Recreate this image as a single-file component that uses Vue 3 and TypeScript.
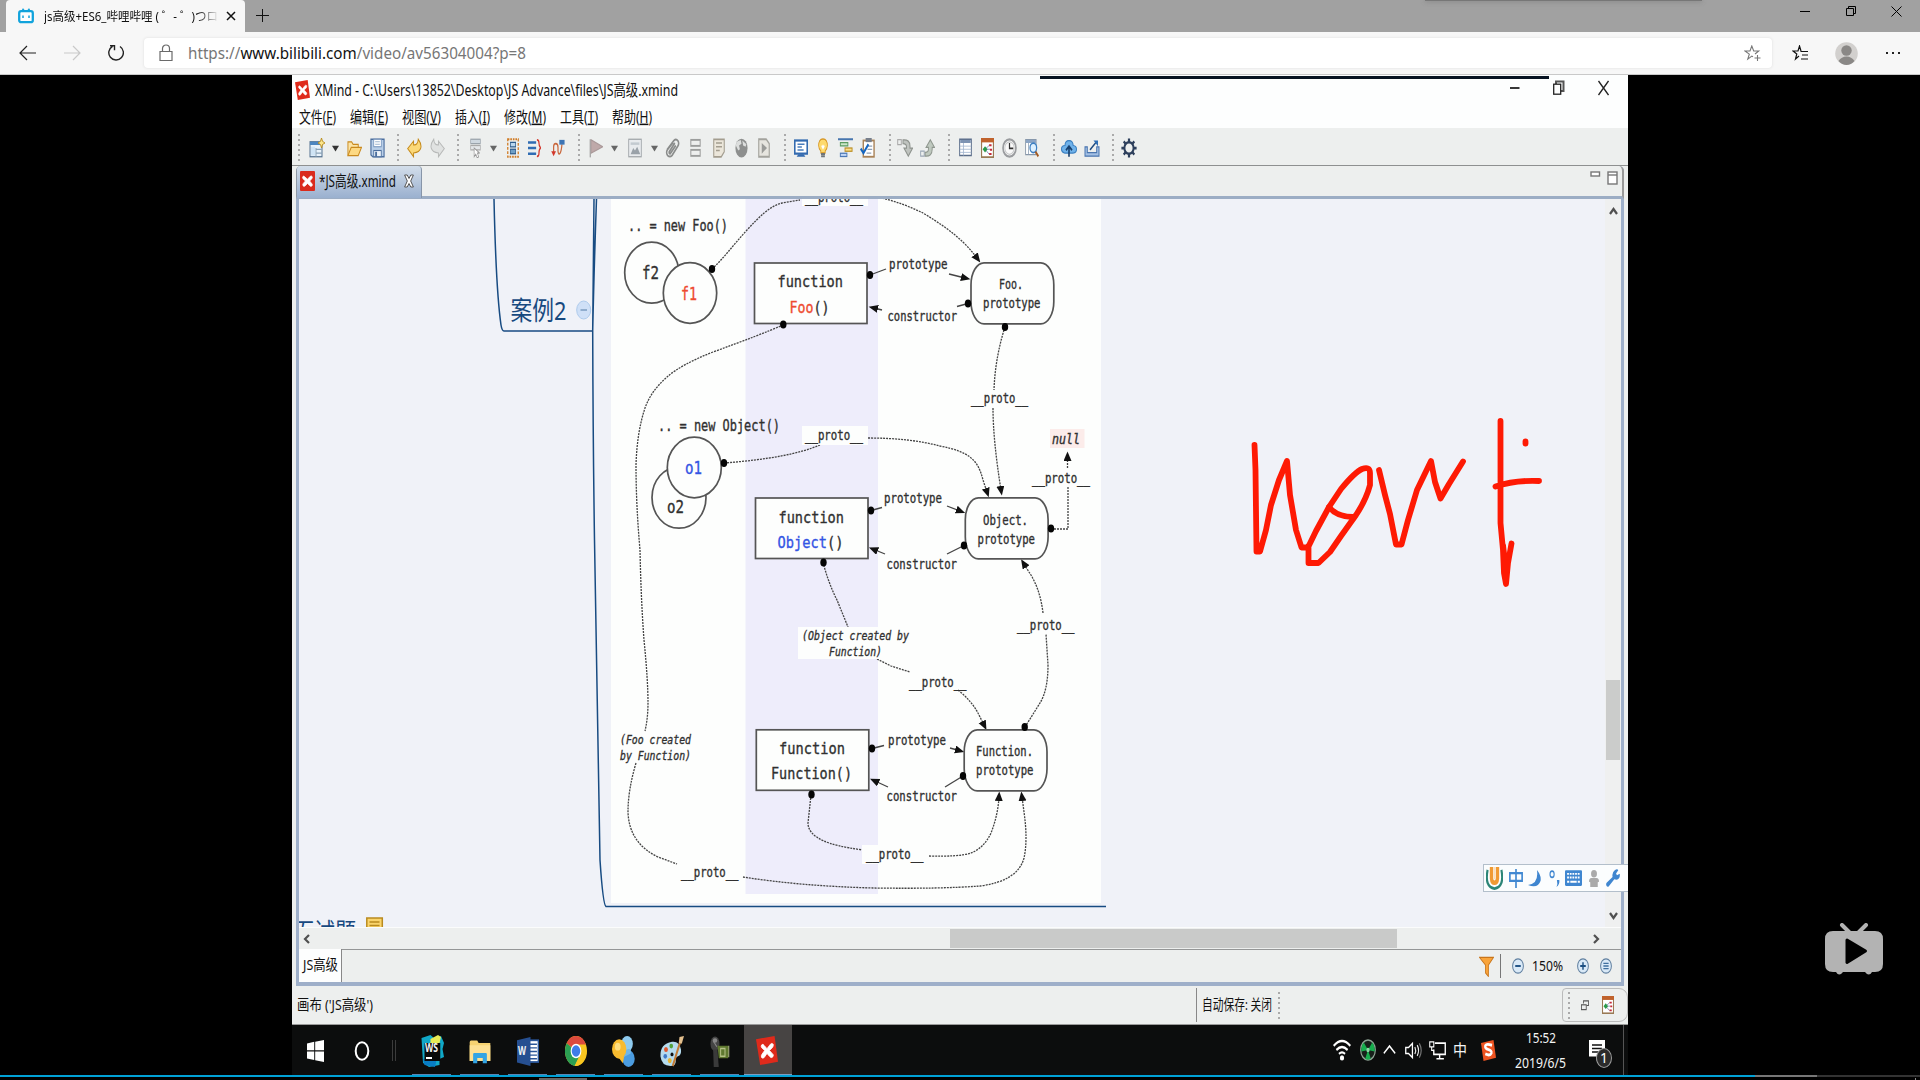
<script setup lang="ts">
import { h, type FunctionalComponent } from 'vue'

interface FitProps { w: number; s: number; h?: number; t?: string }

// Single line of text squeezed or stretched to an exact width
const Fit: FunctionalComponent<FitProps> = (props, { slots }) => {
  const height = props.h ?? 20
  return h('svg', { width: props.w, height, style: 'display:block;overflow:visible;flex:none' }, [
    h('text', {
      x: 0, y: height / 2 + props.s * 0.36, 'font-size': props.s, fill: 'currentColor',
      textLength: props.w, lengthAdjust: 'spacingAndGlyphs',
    }, slots.default ? slots.default() : props.t),
  ])
}
Fit.props = ['w', 's', 'h', 't']

interface IconProps { n: string; w: number; h: number }
const Ico: FunctionalComponent<IconProps> = (props) => h('svg', {
  width: props.w, height: props.h, viewBox: '0 0 16 16', preserveAspectRatio: 'none', fill: 'none',
  style: 'display:block;flex:none', innerHTML: icons[props.n],
})
Ico.props = ['n', 'w', 'h']

const calendar = '<rect x=".7" y=".7" width="14.6" height="14.6" fill="#fff" stroke="#9a7a55" stroke-width="1.4"/><rect width="16" height="3.500" fill="#c0622c"/><path d="M5 9l5-3M5 9h6M5 9l5 4" stroke="#7b7dac" stroke-width=".8"/><path d="M2 9l3-2.500 3 2.500-3 2.500z" fill="#2a9a4a"/><path d="M10 5h3v1.600h-3zM11 8.500h2.600v1.600H11zM10 12h3v1.600h-3z" fill="#c32c39"/>'
const xlogo = '<path d="M0 1.800L13.500 0 16 14.200 3 16z" fill="#df2a1b"/><path d="M4 5q1-1 2 .3L8 7l2.500-2.500q1-.8 2 0 .3 1-.5 1.800L9.800 8l2.700 2.300q.4 1.200-1 1.600-1 .1-1.700-.7L8 9.600l-2 2.200q-1 .9-2 0-.4-1 .4-1.800L6.300 8 4.200 6.500q-.7-.8-.2-1.500z" fill="#fff" stroke="#fff" stroke-width=".5"/>'

const icons: Record<string, string> = {
  xlogo,
  xtab: '<rect width="16" height="16" rx="1" fill="#da2b1d"/><path d="M3 4.500q1-1 2.200.3L8 6.600 11 4.200q1.200-.6 2 .3.300 1-.5 1.700L10.300 8l2.700 2.500q.4 1.200-.7 1.700-1.200.3-2-.6L8 9.900 5.400 11.900q-1.200.8-2.200-.1-.6-1 .3-1.900L5.800 8 3.200 6.200q-.8-.7-.2-1.700z" fill="#fff" stroke="#fff" stroke-width=".7"/>',
  caret: '<path d="M0 5.500h16L8 12z" fill="#333"/>',
  caretg: '<path d="M0 5.500h16L8 12z" fill="#666"/>',
  new: '<rect x="1" y="3" width="12" height="12" fill="#e9f3fb" stroke="#55728f"/><rect x="1" y="3" width="10" height="2.600" fill="#4c86c0"/><path d="M7 8v7M7 9h6M7 12h6" stroke="#8aa3b8"/><rect x="2" y="7" width="4" height="7" fill="#cfe4f5"/><path d="M12.500 0l1 2.600L16 4l-2.500 1.200-1 2.800-1-2.800L9 4l2.500-1.400z" fill="#fbe58a" stroke="#b88a1c" stroke-width=".8"/>',
  open: '<path d="M1 14V3h4l1.500 2H12v3" fill="#fbe4a6" stroke="#c9891e"/><path d="M1 14l3.500-6.500H15.500L12 14z" fill="#fdd983" stroke="#c9891e"/>',
  save: '<path d="M1 1h14v14H3l-2-1.500z" fill="#b9cfe8" stroke="#4c6f9e" stroke-width="1.200"/><rect x="4" y="1" width="8" height="6" fill="#fff" stroke="#6f8fb8" stroke-width=".8"/><path d="M5.500 3h5M5.500 5h5" stroke="#8fa9c7" stroke-width=".8"/><rect x="4" y="10" width="8" height="5" fill="#eef4fa" stroke="#4c6f9e" stroke-width=".9"/><rect x="5.500" y="11" width="2" height="4" fill="#4c6f9e"/>',
  undo: '<path d="M.7 8.500L7 2.500v3Q11.500 6 12 1q3.800 4 2.700 7-1.300 3.500-7.700 4V15z" fill="#fbd878" stroke="#c68b1c" stroke-width="1"/>',
  redo: '<path d="M15.300 8.500L9 2.500v3Q4.500 6 4 1 .2 5 1.300 8 2.600 11.500 9 12V15z" fill="#e0e2e1" stroke="#b7b9b8" stroke-width="1"/>',
  topic: '<rect x="1" y="1" width="14" height="3.500" fill="#cfd8e0" stroke="#9aa3ab"/><rect x="1" y="6" width="14" height="3.500" fill="#e4e7ea" stroke="#aaa"/><path d="M6 8v7l2.500-2 2 3 2-1-1.700-3H14z" fill="#fff" stroke="#999"/>',
  marquee: '<rect x="1" y="1" width="14" height="14" stroke="#d07b24" stroke-width="1.700" stroke-dasharray="2.200 1.200"/><rect x="4.500" y="3.500" width="7" height="3.600" fill="#b9d6ee" stroke="#2e5c8c"/><rect x="4.500" y="9" width="7" height="3.600" fill="#6fa0c8" stroke="#2e5c8c"/>',
  summary: '<path d="M0 3.500h10M0 8h10M0 12.500h10" stroke="#2f6cb3" stroke-width="2"/><path d="M11 1.500q2.500 0 2.500 2.500t2 4q-2 1-2 4T11 14.500" stroke="#d2372c" stroke-width="1.500"/>',
  relation: '<path d="M3 12V7q0-2.500 2.500-2.500T8 7.500v3q.5 3.500 2.500 1.500 1.500-2 2-7" stroke="#c9673c" stroke-width="1.400"/><path d="M.3 10.500h5.400L3 14.500z" fill="#d2372c"/><rect x="9.500" y="1.500" width="6" height="3.800" fill="#3d75b5"/>',
  flag: '<path d="M1.500 1v14.500" stroke="#aaa" stroke-width="1.600"/><path d="M2.500 1.500L15.500 7 2.500 12z" fill="#bfa9a9" stroke="#a99"/>',
  image: '<rect x=".8" y="1" width="14.400" height="14" fill="#e8ebee" stroke="#9fa4a8"/><path d="M3 13l3-5 2 2 2.500-3L14 13z" fill="#9aa2a9"/><path d="M3 3.500h10v2H3z" fill="#c3cad0"/>',
  clip: '<path d="M2 9.500L9.500 2q2.500-1.700 4.500.5 1.300 2-.3 4L7.500 14q-2.300 1.700-4.700 0-2-2.300-.3-4.500l6.300-6M10.500 4L4.500 11q-.4 1.500 1 1.500l6-6.500" stroke="#8a8c8b" stroke-width="1.600"/>',
  boundary: '<rect x="1.200" y="1.500" width="13.600" height="4.800" stroke="#9b9d9c" stroke-width="1.500"/><rect x="1.200" y="9.500" width="13.600" height="4.800" stroke="#9b9d9c" stroke-width="1.500"/>',
  note: '<path d="M1 1h14v10l-4 4H1z" fill="#ebe6da" stroke="#a39d8f" stroke-width="1.400"/><path d="M4 4h8M4 7h8M4 10h5" stroke="#a39d8f" stroke-width="1.200"/>',
  globe: '<circle cx="8" cy="8" r="7.500" fill="#8d8f8e"/><path d="M2 3l5-1.500 1 3-3 1.500 1 3-2 1-3-4zM9 2l5 3-1 2-3-1z" fill="#dcdedd"/>',
  play: '<path d="M1 1h10l4 3.500V15H1z" fill="#e6e5df" stroke="#a3a39d" stroke-width="1.500"/><path d="M5 4l7 4-7 4.500z" fill="#9a9b98"/>',
  monitor: '<rect x=".9" y="2" width="14.200" height="10.500" fill="#fff" stroke="#336bb0" stroke-width="1.800"/><path d="M4 5h8M4 7.200h5M4 9.500h7" stroke="#4a7dbb" stroke-width="1.200"/><path d="M3 15l2-2h6l2 2z" fill="#336bb0"/>',
  bulb: '<path d="M8 .7q7 .3 7 5.300 0 2.500-3.500 4.500V12h-7v-1.500Q1 8.500 1 6 1 1 8 .7z" fill="#fdda6e" stroke="#d6941e" stroke-width="1.200"/><path d="M6 6l2 2 2-2" stroke="#fff" stroke-width="2"/><path d="M4.800 12.800h6.400M5 14.600h6" stroke="#6f757a" stroke-width="1.500"/>',
  gantt: '<rect y=".2" width="16" height="1.600" fill="#4776ae"/><rect x="2.500" y="3.700" width="8" height="2.600" fill="#cbe7cb" stroke="#5b9c62"/><rect x="7.500" y="8" width="7.500" height="2.600" fill="#fbe08d" stroke="#bb8f25"/><rect x="2.500" y="12.200" width="7" height="2.600" fill="#c3d8f7" stroke="#4b78b6"/>',
  clipboard: '<rect x="3.500" y="2" width="11.500" height="13" fill="#fff" stroke="#a98358" stroke-width="1.500"/><rect x="6" y="0" width="6.500" height="3.300" fill="#777f8b"/><path d="M8 6.500h5M8 9h5M7 12h5" stroke="#8ea0b5"/><path d="M.7 8.500L3.700 12 9 5" stroke="#1566c0" stroke-width="2"/>',
  down: '<rect x=".7" y="1.300" width="3.600" height="4" stroke="#aaa" /><path d="M6 1.500q7-.5 7 5v1.500h2.600L11.300 14.500 7 8h2.500V7q0-2.500-3.500-2.500z" fill="#bfc3bf" stroke="#8e938e"/>',
  up: '<rect x=".7" y="10.500" width="3.800" height="4" stroke="#9aa7b5"/><path d="M5.500 14.500q7.500.5 7.500-5.500V7.500h2.500L11 1.500 6.500 7.500H9v1.500q0 2.500-3.500 2.500z" fill="#bfc9bf" stroke="#8e968e"/>',
  table: '<rect x=".8" y="1" width="14.400" height="13" fill="#fff" stroke="#5b6d89" stroke-width="1.200"/><rect x="1.500" y="1.500" width="13" height="2.500" fill="#7d93b3"/><path d="M1 6.500h14M1 9h14M1 11.500h14M5.500 4v10" stroke="#a3b6d0" stroke-width=".8"/>',
  calendar,
  clock: '<circle cx="8" cy="8" r="6.900" fill="#fafafa" stroke="#9a9c9f" stroke-width="1.800"/><circle cx="8" cy="8" r="5" stroke="#c6c8c9"/><path d="M8 4v4.300h4" stroke="#333" stroke-width="1.300"/>',
  search: '<rect x=".7" y="1.300" width="12" height="12" fill="#fff" stroke="#8796a8"/><rect x="1" y="1.500" width="11.500" height="2.500" fill="#8ba4c4"/><path d="M4 4v9" stroke="#9ab"/><circle cx="9.500" cy="7.800" r="3.800" fill="#ddf0ff" stroke="#3d7fc2" stroke-width="1.400"/><path d="M12 11l3.300 3.700" stroke="#a35a22" stroke-width="2"/>',
  cloud: '<path d="M3.500 12Q.5 11.500.5 8.800T4 6Q4 2 8 2t4.200 4q3.300.3 3.300 3t-3 3z" fill="#6fb2ea" stroke="#3a7fc0"/><path d="M8 15V7.500M5 9.800L8 6.500l3 3.300" stroke="#17406e" stroke-width="1.600"/>',
  share: '<path d="M1 7v7.500h14V7h-2.300v4.700H3.300V7z" fill="#a3c0e5" stroke="#4b76af"/><path d="M6 9.500L12.500 3" stroke="#1d4a80" stroke-width="1.400"/><path d="M9.500 2H14v4.500z" fill="#2b6cb5"/>',
  gear: '<path d="M8 .4v15.200M.4 8h15.200M2.700 2.700l10.600 10.600M13.300 2.700L2.700 13.300" stroke="#2d3f5c" stroke-width="2.200"/><circle cx="8" cy="8" r="4.600" fill="#edefee" stroke="#2d3f5c" stroke-width="2"/>',
  start: '<path d="M0 2.500l6.800-1.200v6.200H0zM7.700 1.200L16 0v7.500H7.700zM0 8.400h6.800v6.200L0 13.500zM7.700 8.400H16V16l-8.300-1.200z" fill="#fff"/>',
  ws: '<path d="M1 1.500L7 0l3 2 4-1.500L16 4l-1 3 1 4-3 1v3l-7 1-4-2z" fill="#10a8c8"/><path d="M7 2l5-2 2 1-1 3-6 1z" fill="#e7ea55"/><path d="M2 12l9 .5-1 3.500-7-1z" fill="#087cc4"/><rect x="3" y="4" width="10.500" height="9" fill="#0a0a0a"/><rect x="4" y="11" width="4" height="1" fill="#fff"/>',
  folder: '<path d="M.5 2q0-1 1-1H6l1 1.500h8.500V14H.5z" fill="#f6d271"/><path d="M.5 4h15v10H.5z" fill="#fde093"/><path d="M3 15.500V9.800q0-.8.800-.8h8.400q.8 0 .8.800v5.700h-3v-3.300H6v3.300z" fill="#33a4e3"/>',
  word: '<rect x="8" y="1.800" width="7.500" height="12" fill="#fff" stroke="#2a5699"/><path d="M9 4h5.500M9 6h5.500M9 8h5.500M9 10h5.500M9 12h5.500" stroke="#2a5699" stroke-width=".8"/><path d="M0 1.800L9.800 0v16L0 14z" fill="#264f91"/>',
  chrome: '<circle cx="8" cy="8" r="8" fill="#f9c620"/><path d="M8 8L1.200 3.800A8 8 0 0115.200 4.500H8z" fill="#dc4a3d"/><path d="M8 8L1.200 3.800A8 8 0 007 16l4-6z" fill="#2b9f52"/><path d="M8 8h7.600A8 8 0 017 16l4-6z" fill="#f9c620"/><circle cx="8" cy="8" r="3.900" fill="#fff"/><circle cx="8" cy="8" r="3.100" fill="#3f7de8"/>',
  balloon: '<circle cx="10.500" cy="4" r="4" fill="#8fcbef"/><circle cx="11.500" cy="11.700" r="4.300" fill="#4b9ce0"/><path d="M10 7q4-1 3 2l-5 2z" fill="#6fb6e8"/><circle cx="5" cy="6.700" r="5" fill="#f8bb2f"/><path d="M4 10.500h4.500L7.500 14z" fill="#f8bb2f"/><circle cx="4" cy="5.500" r="2" fill="#fdde80"/>',
  palette: '<path d="M8 3Q13 2.500 14 7q.4 3-2 3.500-2 .5-1.500 2.500 0 2.500-3.500 2.500-6 0-6.700-5Q0 4 8 3z" fill="#b5dbee"/><circle cx="4" cy="7" r="1.300" fill="#e0562d"/><circle cx="7.500" cy="5.200" r="1.200" fill="#52a33c"/><circle cx="3.500" cy="10.500" r="1.200" fill="#3f7ac8"/><circle cx="6.500" cy="12.700" r="1.300" fill="#e8b431"/><circle cx="8" cy="9.500" r="1" fill="#111"/><path d="M8.500 15.500L13.500 3" stroke="#c37b35" stroke-width="1.300"/><path d="M12.500 3.500L13 .5 16 0l-1.500 4z" fill="#e4c08e"/>',
  mic: '<ellipse cx="4" cy="4" rx="3.600" ry="3.800" fill="#444"/><path d="M2.500 2.500l3 3" stroke="#888" stroke-width=".7"/><ellipse cx="4" cy="2.300" rx="1.800" ry="1.200" fill="#888"/><path d="M2.500 7h3.500l1 9H3z" fill="#3a3a3a"/><path d="M6 5h8.500v6.500H7z" fill="#5f782f"/><path d="M8.500 6.500H12v4H8.500zM15 5v6" stroke="#b5c187" stroke-width=".8"/>',
  wifi: '<path d="M.6 5Q8-2 15.400 5M3 8q5-4.300 10 0M5.300 10.800q2.700-2.200 5.400 0" stroke="#fff" stroke-width="1.700"/><circle cx="8" cy="13.800" r="1.900" fill="#fff"/>',
  rad: '<circle cx="8" cy="8" r="7.300" fill="#17201a" stroke="#8fa596" stroke-width="1.200"/><path d="M8 8L3.800 2.500A7 7 0 001.400 9zM8 8l4.200-5.500A7 7 0 0114.600 9zM8 8l-2.800 6.300a7 7 0 005.600 0z" fill="#17ae4e"/><circle cx="8" cy="8" r="1.600" fill="#8fd6a6"/>',
  chev: '<path d="M1 11l7-6.500 7 6.500" stroke="#fff" stroke-width="1.600"/>',
  speaker: '<path d="M.7 5.500h2.600L7 2v12L3.300 10.500H.700z" stroke="#fff" stroke-width="1.200"/><path d="M9.300 5q1.500 3 0 6M11.500 3.500q2.500 4.500 0 9" stroke="#eee" stroke-width="1.100"/><path d="M13.500 2q3.500 6 0 12" stroke="#777" stroke-width="1.100"/>',
  net: '<path d="M5.500 2.500h9.800v9H4.500V7.500M7 15h7M10 11.500V15" stroke="#fff" stroke-width="1.300"/><path d="M.7 1.500h3.800v4H.7zM2.500 5.500v2.800h2" stroke="#fff"/>',
  sogou: '<path d="M1 2.300L13.500 0 16 13.500 3.500 16z" fill="#ee5320"/><path d="M12 4Q6 2.300 5.200 4.600 4.800 6.500 8.500 7.300q3.500.9 3 2.700-1.300 2.400-6.200.6" stroke="#fff" stroke-width="2.200"/>',
  notify: '<path d="M0 0h16v12.500h-6L7.500 16v-3.500H0z" fill="#fff"/><path d="M3 3.800h10M3 6.500h10M3 9.200h7" stroke="#111" stroke-width="1.100"/>',
  funnel: '<path d="M.5 1h15L10 7v8.500L7 13V7z" fill="#f9a43a" stroke="#c9751a" stroke-width=".9"/>',
  minus: '<circle cx="8" cy="8" r="7.200" fill="#d9e9f7" stroke="#5f7f9f" stroke-width="1.300"/><path d="M4.300 8h7.400" stroke="#1c4f82" stroke-width="1.900"/>',
  plus: '<circle cx="8" cy="8" r="7.200" fill="#d9e9f7" stroke="#5f7f9f" stroke-width="1.300"/><path d="M4.300 8h7.400M8 4.300v7.400" stroke="#1c4f82" stroke-width="1.900"/>',
  fit: '<circle cx="8" cy="8" r="7.200" fill="#d9e9f7" stroke="#5f7f9f" stroke-width="1.300"/><path d="M4.500 5.300h7M4.500 8h7M4.500 10.700h7" stroke="#3f6f9f" stroke-width="1.300"/>',
  restoreSm: '<path d="M5 5V1.200h10V8h-4" stroke="#555" stroke-width="1.700"/><rect x="1" y="7" width="9.500" height="7" stroke="#555" stroke-width="1.700"/>',
  ulogo: '<path d="M1.500 2Q-1.500 14 8 15 17.500 14 14.500 2" stroke="#2c8577" stroke-width="2"/><path d="M5.200 0v8q.3 3 2.800 3t2.800-3V0" stroke="#f09a33" stroke-width="3.200"/><path d="M8 0v8.500" stroke="#fbe0b8" stroke-width="1.300"/>',
  zhong: '<rect x="1" y="3.500" width="14" height="6.500" stroke="#4088d2" stroke-width="1.900"/><path d="M8 0v16" stroke="#4088d2" stroke-width="1.900"/>',
  moon: '<path d="M11 0q5.500 5 4.500 10-3.500 8-15.500 4 13.500-1 11-14z" fill="#3f86d0"/>',
  punct: '<circle cx="4.500" cy="4" r="3" stroke="#3f86d0" stroke-width="1.600"/><path d="M11.500 9.500h3.500q1 4-4 6.500 2-2.500.5-6.500z" fill="#3f86d0"/>',
  kbd: '<rect y="1" width="16" height="14" rx="1" fill="#3f86d0"/><path d="M2 4.300h12M2 7.500h12" stroke="#fff" stroke-width="1.700" stroke-dasharray="1.700 .8"/><path d="M2 11.300h2M5 11.300h6M12 11.300h2" stroke="#fff" stroke-width="1.700"/>',
  person: '<ellipse cx="8" cy="3.600" rx="4.700" ry="3.500" fill="#aaa"/><path d="M0 11q0-3.500 4-3.500h8q4 0 4 3.500l-2 .5V16H2v-4.500z" fill="#aaa"/>',
  wrench: '<path d="M10 1q3-1.500 4 0L11.500 4l1 1.500 3.200-1.200Q16.500 9 12 9.500l-2.500-.3L3 15.500Q1 16.300.3 14.500q-.5-1.500.7-2.500L7.500 7Q6.500 3 10 1z" fill="#3f86d0"/>',
}

// [icon, width, space before]
const toolbar: [string, number, number][] = [
  ['sep', 2, 6], ['new', 16, 9], ['caret', 7, 7], ['open', 15, 8], ['save', 15, 8],
  ['sep', 2, 12], ['undo', 15, 8], ['redo', 15, 8],
  ['sep', 2, 12], ['topic', 11, 11], ['caretg', 7, 9], ['marquee', 12, 10], ['summary', 13, 9], ['relation', 14, 10],
  ['sep', 2, 13], ['flag', 14, 9], ['caretg', 7, 8], ['image', 14, 10], ['caretg', 7, 9], ['clip', 15, 7],
  ['boundary', 11, 10], ['note', 12, 12], ['globe', 13, 10], ['play', 12, 10],
  ['sep', 2, 14], ['monitor', 14, 8], ['bulb', 10, 10], ['gantt', 15, 10], ['clipboard', 15, 7],
  ['sep', 2, 14], ['down', 16, 6], ['up', 15, 7],
  ['sep', 2, 13], ['table', 13, 9], ['calendar', 13, 9], ['clock', 15, 8], ['search', 14, 8],
  ['sep', 2, 14], ['cloud', 16, 6], ['share', 16, 7],
  ['sep', 2, 12], ['gear', 16, 7],
]

const menus: [string, string, number][] = [
  ['文件', 'F', 37], ['编辑', 'E', 38], ['视图', 'V', 39], ['插入', 'I', 35],
  ['修改', 'M', 42], ['工具', 'T', 38], ['帮助', 'H', 40],
]

const tasks: [string, number, number][] = [
  ['ws', 24, 32], ['folder', 22, 25], ['word', 22, 29], ['chrome', 22, 30],
  ['balloon', 23, 31], ['palette', 24, 31], ['mic', 20, 31], ['xlogo', 22, 29],
]

// [icon, width, height, space before]
const imeKeys: [string, number, number, number][] = [
  ['ulogo', 17, 23, 2], ['zhong', 14, 19, 6], ['moon', 13, 17, 5], ['punct', 11, 17, 8],
  ['kbd', 17, 18, 5], ['person', 10, 17, 7], ['wrench', 14, 18, 7],
]

// Prototype-chain figure: [x1, x2, baseline, size, text, class]
const labels: [number, number, number, number, string, string?][] = [
  [628, 728, 231, 15, '.. = new Foo()'],
  [642, 659, 279, 17, 'f2'], [681, 697, 299.5, 17, 'f1', 'red'],
  [777.5, 843, 287, 16.5, 'function'],
  [658, 780, 430.5, 15, '.. = new Object()'],
  [685, 702, 474, 17, 'o1', 'blue'], [667, 684, 513, 17, 'o2'],
  [778.5, 844, 522.5, 16.5, 'function'],
  [779, 845, 754, 16.5, 'function'], [771, 852, 779, 16.5, 'Function()'],
  [999, 1023, 289, 13.5, 'Foo.'], [983, 1040.5, 308, 13.5, 'prototype'],
  [983, 1028, 524.5, 13.5, 'Object.'], [977.5, 1035, 543.5, 13.5, 'prototype'],
  [976, 1033, 756, 13.5, 'Function.'], [976, 1033.5, 775, 13.5, 'prototype'],
  [889, 947.5, 269, 13.5, 'prototype'], [887.500, 957, 321, 13.5, 'constructor'],
  [884, 942, 503, 13.5, 'prototype'], [886.5, 957, 568.5, 13.5, 'constructor'],
  [888, 946, 745.3, 13.5, 'prototype'], [886.5, 957, 801.3, 13.5, 'constructor'],
  [805, 863, 202.3, 13.5, '__proto__'], [971, 1028, 403, 13.5, '__proto__'],
  [805, 863, 440, 13.5, '__proto__'], [1032, 1090, 482.6, 13.5, '__proto__'],
  [1017, 1074.5, 629.6, 13.5, '__proto__'], [909, 966.5, 687, 13.5, '__proto__'],
  [866, 923.5, 859.3, 13.5, '__proto__'], [681, 738.5, 877.3, 13.5, '__proto__'],
  [1052, 1080, 444.3, 13.5, 'null', 'it'],
  [802, 909, 640, 13, '(Object created by', 'it'], [829, 882, 656, 13, 'Function)', 'it'],
  [620, 691, 744, 13, '(Foo created', 'it'], [620, 691, 760, 13, 'by Function)', 'it'],
]

const dotted: { d: string; arrow?: boolean }[] = [
  { d: 'M712 269C724 258 734 244 747 230S770 206 782 203L800 200' },
  { d: 'M882 198Q905 204 923 213Q948 228 963 242Q971 250 977 258', arrow: true },
  { d: 'M783 325Q760 335 713 352Q682 364 667 377Q651 391 645 408Q637 432 636 465Q636 505 640 550Q641 600 644 640Q648 680 648 703Q648 718 645 731' },
  { d: 'M636 763Q628 790 628 812Q629 843 658 857L677 864' },
  { d: 'M743 877Q800 886 873 888Q940 889 980 886Q1018 881 1024 858Q1028 840 1024 812L1022 797', arrow: true },
  { d: 'M1004 330Q995 360 994 390' },
  { d: 'M993 408Q993 440 1001 490', arrow: true },
  { d: 'M724 463Q790 458 820 445' },
  { d: 'M868 438Q910 438 940 446C970 452 978 460 983 480L987 492', arrow: true },
  { d: 'M1051 529H1068V487' },
  { d: 'M1067.500 468V457', arrow: true },
  { d: 'M823 562Q828 582 837 600L848 627' },
  { d: 'M877 659L891 666L910 672' },
  { d: 'M958 690Q972 701 979 715L984 725', arrow: true },
  { d: 'M1025 727L1040 703Q1048 690 1048 665L1046 634' },
  { d: 'M1043 613Q1040 588 1029 572L1024 564', arrow: true },
  { d: 'M811 795L808 823Q808 834 824 841Q834 846 863 850' },
  { d: 'M929 856Q958 857 971 853Q984 848 991 833Q998 815 999 797', arrow: true },
]
const solid: { d: string; arrow?: boolean }[] = [
  { d: 'M870 275L886 269' }, { d: 'M949 274L965 278', arrow: true },
  { d: 'M968 303.500L957 306.500' }, { d: 'M882 310L874 308', arrow: true },
  { d: 'M871 510.500L882 507.500' }, { d: 'M947 506L960 511', arrow: true },
  { d: 'M964 545.500L947 554' }, { d: 'M885 554L874 549.500', arrow: true },
  { d: 'M872 748.500L884 745.500' }, { d: 'M950 748L959 750.500', arrow: true },
  { d: 'M963 776L945 787' }, { d: 'M888 787L875 781', arrow: true },
]
const dots: [number, number][] = [
  [712, 269], [783.3, 324.5], [870, 275], [968, 303.5], [1005, 327], [724, 463], [871, 510.5], [964, 545.5],
  [1051, 528.5], [823.5, 562.5], [1024.7, 727], [872, 748.5], [963, 776], [811.500, 794.5],
]
const boxes: [number, number][] = [[754.5, 263], [755.5, 498], [756.3, 729.8]]
const pills: [number, number][] = [[971, 262.8], [965.3, 497.8], [964.2, 729.8]]
</script>

<template>
  <div class="screen">
    <header class="tabs">
      <div class="tab">
        <svg class="tv" width="16" height="16" viewBox="0 0 16 16" fill="none" stroke="#11a3dc">
          <path d="M4.500 .8L6.300 3M11.500 .8L9.700 3" stroke-width="1.600" />
          <rect x="1.200" y="3.200" width="13.600" height="11" rx="2" fill="#fff" stroke-width="2.300" />
          <path d="M5 7.500v2.500M11 7.500v2.500" stroke-width="1.500" />
        </svg>
        <div class="tabtitle"><Fit :w="174" :s="12.5" :h="20" t="js高级+ES6_哔哩哔哩 ( ゜- ゜)つロ" /></div>
        <svg width="10" height="10" viewBox="0 0 10 10" stroke="#111" stroke-width="1.500"><path d="M1 1l8 8M9 1L1 9" /></svg>
      </div>
      <svg class="plus" width="13" height="13" viewBox="0 0 13 13" stroke="#111"><path d="M6.500 0v13M0 6.500h13" /></svg>
      <div class="topshade"></div>
      <svg class="winbtns" width="104" height="12" viewBox="0 0 104 12" fill="none" stroke="#000">
        <path d="M1 6.500h10M92.500 1.500l10 10M102.500 1.500l-10 10" />
        <path d="M49.500 3V1.500h7v7H55M47.500 3.500h7v7h-7z" />
      </svg>
    </header>

    <div class="nav">
      <svg class="navicons" width="110" height="20" viewBox="0 0 110 20" fill="none" stroke-width="1.200">
        <path d="M6 10h16M13 3L6 10l7 7" stroke="#222" />
        <path d="M50 10h16M59 3l7 7-7 7" stroke="#c9c9c9" />
        <path d="M98.500 3.300A7.300 7.300 0 10106 3.500M96 2.800h4.500v4.500" stroke="#222" stroke-width="1.400" />
      </svg>
      <div class="address">
        <svg width="14" height="18" viewBox="0 0 14 18" fill="none" stroke="#6a6a6a" stroke-width="1.200"><path d="M1 7.500h12v9H1zM3.500 7.500V4.500a3.500 3.500 0 017 0v3" /></svg>
        <Fit class="url" :w="338" :s="15.5" :h="24">https://<tspan fill="#111">www.bilibili.com</tspan>/video/av56304004?p=8</Fit>
        <svg class="star" width="17" height="17" viewBox="0 0 17 17" fill="none" stroke="#777" stroke-width="1.100"><path d="M9 11.800l-1.200-.7-4 3 1.500-5L1 6h5L7.800 1l1.900 5h5L11 9M13.500 10v6M10.500 13h6" /></svg>
      </div>
      <svg class="favs" width="17" height="17" viewBox="0 0 17 17" fill="none" stroke="#111" stroke-width="1.200"><path d="M7 11l-3.500 3 1.300-5L1 6h5L7.500 1l1.500 5M8.500 6.500H16M10 10h6M9 14h7" /></svg>
      <svg class="avatar" width="23" height="23" viewBox="0 0 23 23"><circle cx="11.500" cy="11.500" r="11.300" fill="#d2d0ce" /><circle cx="11.500" cy="8.500" r="5.200" fill="#8a8886" /><path d="M3.500 19q3-4.500 8-4.500t8 4.500q-3.500 4-8 4t-8-4z" fill="#8a8886" /></svg>
      <svg class="more" width="14" height="2" viewBox="0 0 14 2" fill="#222"><path d="M0 0h2v2H0zM6 0h2v2H6zM12 0h2v2h-2z" /></svg>
    </div>

    <main class="stage">
      <section class="xmind">
        <div class="recbar"></div>
        <div class="titlebar">
          <Ico n="xlogo" :w="15" :h="20" />
          <Fit class="wtitle" :w="363" :s="15.5" t="XMind - C:\Users\13852\Desktop\JS Advance\files\JS高级.xmind" />
          <svg class="wbtn" width="100" height="16" viewBox="0 0 100 16" fill="none" stroke="#222" stroke-width="1.300">
            <path d="M1 8h9.500" stroke-width="1.800" /><path d="M47 4V1.500h7.500V11H52" stroke="#555" stroke-width="2" /><rect x="44.700" y="4.200" width="7" height="10" />
            <path d="M89.500 1l10 14M99.500 1l-10 14" />
          </svg>
        </div>
        <nav class="menubar">
          <Fit v-for="m in menus" :key="m[1]" :w="m[2]" :s="15.5">{{ m[0] }}(<tspan text-decoration="underline">{{ m[1] }}</tspan>)</Fit>
        </nav>
        <div class="toolbar">
          <span v-for="(t, i) in toolbar" :key="i" :style="{ marginLeft: t[2] + 'px' }">
            <i v-if="t[0] === 'sep'" class="sep"></i>
            <Ico v-else :n="t[0]" :w="t[1]" :h="t[0].startsWith('caret') ? 14 : 20" />
          </span>
        </div>

        <div class="editor">
          <div class="etabs">
            <div class="etab">
              <Ico n="xtab" :w="15" :h="20" />
              <Fit :w="77" :s="15.5" t="*JS高级.xmind" />
              <svg width="10" height="14" viewBox="0 0 10 14" fill="#fff" stroke="#555" stroke-width="1"><path d="M.6 1h2.600L5 4.500 6.800 1h2.600L6.700 7l2.700 6H6.800L5 9.500 3.200 13H.6L3.300 7z" /></svg>
            </div>
            <svg class="ebtn" width="28" height="14" viewBox="0 0 28 14" fill="#fff" stroke="#777" stroke-width="1.400"><rect x="1" y="1" width="8.500" height="4" /><rect x="18" y="1" width="9" height="12" /><path d="M18 4h9" /></svg>
          </div>
          <div class="work">
            <svg class="canvas" viewBox="299 199 1306 728" width="1306" height="728">
              <defs>
                <marker id="tip" markerUnits="userSpaceOnUse" markerWidth="12" markerHeight="10" refX="4" refY="4" orient="auto"><path d="M0 0L9.500 4 0 8z" fill="#111" /></marker>
              </defs>
              <rect x="611" y="199" width="490" height="704" fill="#fdfefd" />
              <rect x="745.500" y="199" width="132.500" height="695" fill="#eeedfb" />
              <g fill="none" stroke="#174b82" stroke-width="1.500">
                <path d="M494 199Q496 290 501 325Q502 331 504 331H593" />
                <path d="M594 199L592.700 331M596.500 199Q594 270 592.700 331Q593 440 594.500 540T600 860Q603 905 606 906.500H1106" />
              </g>
              <text class="topicname" x="510.500" y="320" font-size="26" textLength="56" lengthAdjust="spacingAndGlyphs">案例2</text>
              <ellipse cx="583.700" cy="310" rx="7" ry="9" fill="#cfe0f7" stroke="#aecbec" /><path d="M580.500 310h6.500" stroke="#6f91b8" stroke-width="1.300" />
              <text class="topicname" x="293" y="941.500" font-size="26" textLength="63" lengthAdjust="spacingAndGlyphs">面试题</text>
              <rect x="366.800" y="918" width="15.500" height="14" fill="#fad46b" stroke="#b98a1f" stroke-width="1.500" /><path d="M369.500 922h10M369.500 925.500h10" stroke="#b98a1f" stroke-width="1.300" />

              <g class="edges">
                <path v-for="(e, i) in dotted" :key="'d' + i" :d="e.d" stroke-dasharray="2 1" :marker-end="e.arrow ? 'url(#tip)' : undefined" />
                <path v-for="(e, i) in solid" :key="'s' + i" :d="e.d" :marker-end="e.arrow ? 'url(#tip)' : undefined" />
              </g>
              <g class="shape">
                <ellipse cx="651.700" cy="272.700" rx="27" ry="30.500" /><ellipse cx="690" cy="293" rx="26.700" ry="30.300" />
                <ellipse cx="679" cy="497.500" rx="27" ry="30.700" /><ellipse cx="694.300" cy="467.500" rx="27" ry="30.300" />
                <rect v-for="b in boxes" :key="b[1]" :x="b[0]" :y="b[1]" width="112.500" height="60.500" />
                <rect v-for="p in pills" :key="p[1]" :x="p[0]" :y="p[1]" width="82.800" height="61" rx="13" ry="22" />
              </g>
              <ellipse v-for="(d, i) in dots" :key="i" :cx="d[0]" :cy="d[1]" rx="3.200" ry="4" fill="#050505" />
              <g fill="#fdfefd"><path d="M802 199h66v7h-66zM802 426h66v19h-66zM798 627h87v32h-87zM862 845h66v19h-66z" /></g>
              <rect x="1050" y="429" width="34.500" height="19" fill="#fcecea" />
              <g class="labels">
                <text v-for="(l, i) in labels" :key="i" :x="l[0]" :y="l[2]" :font-size="l[3]" :class="l[5]" :textLength="l[1] - l[0]" lengthAdjust="spacingAndGlyphs">{{ l[4] }}</text>
                <text x="789.500" y="312.800" font-size="16.500" textLength="40" lengthAdjust="spacingAndGlyphs"><tspan class="red">Foo</tspan>()</text>
                <text x="777.500" y="547.500" font-size="16.500" textLength="66" lengthAdjust="spacingAndGlyphs"><tspan class="blue">Object</tspan>()</text>
              </g>
              <g class="ink">
                <path d="M1254.500 445L1255.500 470L1256.500 551.500H1260L1266 530L1271 505L1279 480L1287 461L1290 495L1296 530L1301.500 547.500H1308L1316 531L1329 507L1341 489Q1355 472 1362 469Q1370 466 1370 473L1370 485Q1366 500 1356 515L1341 536L1330 552L1318.500 563H1308.500V546" />
                <path d="M1329 507Q1337 517 1353 517M1379 470L1385 495L1390 514L1396 544.500H1401.500L1408 520L1417 490L1431 461L1435 482L1440.500 498.500L1449 484L1463 461.500" />
                <path d="M1500.500 421V523L1503 550L1504 573L1506 584L1508 563L1511.500 543.500M1503 545L1506 570M1495.500 486.500Q1515 480 1539 481" />
                <path d="M1525.500 441.500v2" stroke-width="6" />
              </g>
            </svg>
            <div class="vscroll">
              <svg width="9" height="8" viewBox="0 0 9 8" fill="none" stroke="#505050" stroke-width="2.200"><path d="M1 7l3.500-5L8 7" /></svg>
              <div class="vthumb"></div>
              <svg width="9" height="8" viewBox="0 0 9 8" fill="none" stroke="#505050" stroke-width="2.200"><path d="M1 1l3.500 5L8 1" /></svg>
            </div>
          </div>
          <div class="hscroll">
            <svg width="7" height="10" viewBox="0 0 7 10" fill="none" stroke="#505050" stroke-width="2.200"><path d="M6 1L2 5l4 4" /></svg>
            <div class="hthumb"></div>
            <svg width="7" height="10" viewBox="0 0 7 10" fill="none" stroke="#505050" stroke-width="2.200"><path d="M1 1l4 4-4 4" /></svg>
          </div>
          <div class="sheets">
            <div class="sheet"><Fit :w="35" :s="15" t="JS高级" /></div>
            <div class="zoom">
              <Ico n="funnel" :w="15" :h="21" />
              <i></i>
              <Ico class="zminus" n="minus" :w="12" :h="16" />
              <Fit :w="31" :s="15" t="150%" />
              <Ico class="zplus" n="plus" :w="12" :h="16" />
              <Ico n="fit" :w="12" :h="16" />
            </div>
          </div>
        </div>

        <footer class="status">
          <Fit class="sheetname" :w="76" :s="15" t="画布 ('JS高级')" />
          <div class="autosave"><Fit :w="70" :s="14.5" t="自动保存: 关闭" /><i class="sep"></i></div>
          <div class="tray">
            <i class="sep"></i>
            <Ico n="restoreSm" :w="8" :h="11" />
            <Ico n="calendar" :w="12" :h="18" />
          </div>
        </footer>

        <div class="taskbar">
          <div class="startbtn"><Ico n="start" :w="17" :h="22" /></div>
          <svg class="cortana" width="16" height="22" viewBox="0 0 16 22"><ellipse cx="8" cy="11" rx="6.300" ry="8.800" fill="none" stroke="#fff" stroke-width="2" /></svg>
          <div class="grip"></div>
          <div v-for="t in tasks" :key="t[0]" class="task" :class="{ active: t[0] === 'xlogo' }">
            <Ico :n="t[0]" :w="t[1]" :h="t[2]" />
            <span v-if="t[0] === 'ws'" class="wsmark"><Fit :w="13" :s="12.5" :h="12" t="WS" /></span>
            <span v-if="t[0] === 'word'" class="wmark"><Fit :w="8" :s="12" :h="14" t="W" /></span>
          </div>
          <div class="systray">
            <Ico n="wifi" :w="18" :h="22" />
            <Ico class="s1" n="rad" :w="16" :h="22" />
            <Ico class="s2" n="chev" :w="13" :h="18" />
            <Ico class="s3" n="speaker" :w="17" :h="19" />
            <Ico class="s4" n="net" :w="17" :h="20" />
            <Fit class="s5" :w="14" :s="16" t="中" />
            <Ico class="s6" n="sogou" :w="16" :h="21" />
            <div class="clock"><Fit :w="30" :s="15" :h="25" t="15:52" /><Fit :w="51" :s="15" :h="25" t="2019/6/5" /></div>
            <div class="notify">
              <Ico n="notify" :w="16" :h="21" />
              <div class="badge">1</div>
            </div>
          </div>
        </div>

        <div class="ime">
          <span v-for="k in imeKeys" :key="k[0]" :style="{ marginLeft: k[3] + 'px' }"><Ico :n="k[0]" :w="k[1]" :h="k[2]" /></span>
        </div>
      </section>

      <svg class="playtv" width="58" height="52" viewBox="0 0 58 52">
        <path d="M17 2l8 8M41 2l-8 8" stroke="#b3b3b3" stroke-width="4" stroke-linecap="round" />
        <path d="M8 8h42q8 0 8 8v25q0 8-8 8h-3q-3 5-7 0H18q-4 5-7 0H8q-8 0-8-8V16q0-8 8-8z" fill="#b3b3b3" />
        <path d="M22 17l18.500 11L22 39.500z" fill="#000" stroke="#000" stroke-width="3" stroke-linejoin="round" />
      </svg>
      <div class="progress"><div class="played"></div><div class="loaded"></div></div>
      <div class="below"><span></span><b></b></div>
    </main>
  </div>
</template>

<style>
body { margin: 0; background: #000; overflow: hidden; }
</style>

<style scoped>
.screen { width: 1920px; height: 1080px; display: flex; flex-direction: column; background: #000; overflow: hidden; font-family: "Noto Sans", "Noto Sans CJK SC", sans-serif; color: #111; }
.tabs { height: 32px; flex: none; display: flex; background: #a1a1a1; position: relative; }
.tab { width: 239px; margin-left: 6px; background: #f7f7f7; border-radius: 4px 4px 0 0; display: flex; align-items: center; box-sizing: border-box; padding-left: 12px; }
.tv { margin-right: 10px; }
.tabtitle { width: 175px; margin-right: 7px; -webkit-mask-image: linear-gradient(90deg, #000 88%, transparent); mask-image: linear-gradient(90deg, #000 88%, transparent); }
.plus { margin: 9px 0 0 11px; }
.topshade { position: absolute; left: 1425px; top: 0; width: 277px; height: 1px; background: #777; box-shadow: 0 0 5px #555; }
.winbtns { margin: 5px 17px 0 auto; }
.nav { height: 42px; flex: none; background: #f7f7f7; border-bottom: 1px solid #c9c9c9; display: flex; align-items: center; }
.navicons { margin-left: 14px; flex: none; }
.address { width: 1628px; height: 30px; margin-left: 20px; background: #fff; border-radius: 4px; box-shadow: 0 0 3px #ddd; display: flex; align-items: center; box-sizing: border-box; padding: 0 11px 0 15px; flex: none; }
.url { margin-left: 15px; color: #767676; }
.star { margin-left: auto; }
.favs { margin-left: 20px; }
.avatar { margin-left: 26px; }
.more { margin-left: 28px; }
.stage { flex: 1; position: relative; background: #000; }
.xmind { width: 1336px; height: 1000px; margin-left: 292px; background: #edefee; position: relative; display: flex; flex-direction: column; overflow: hidden; }
.recbar { position: absolute; left: 748px; top: 1px; width: 509px; height: 3px; background: #071322; }
.titlebar { height: 29px; flex: none; background: #fdfefe; display: flex; align-items: center; padding-left: 3px; }
.wtitle { margin-left: 5px; }
.wbtn { margin: -3px 19px 0 auto; }
.menubar { height: 24px; flex: none; background: #fdfefe; display: flex; gap: 14px; padding: 3px 0 0 6.500px; box-sizing: border-box; }
.toolbar { height: 38px; flex: none; display: flex; align-items: center; border-bottom: 1px solid #8e9090; box-sizing: border-box; padding-top: 2px; }
.sep { display: block; width: 2px; height: 27px; background: repeating-linear-gradient(#aaa 0 2px, transparent 2px 5px); }
.editor { width: 1328px; height: 820px; margin-left: 4px; flex: none; box-sizing: border-box; border: solid #9eafc9; border-width: 0 3px 4px 3px; border-radius: 5px 5px 0 0; display: flex; flex-direction: column; }
.etabs { height: 33px; flex: none; margin: 0 -3px; box-sizing: border-box; border-bottom: 3px solid #9cadc4; background: #edefee; border-left: 1px solid #8f98a4; border-right: 2px solid #999; display: flex; justify-content: space-between; border-radius: 5px 5px 0 0; }
.etab { width: 125px; height: 32px; background: linear-gradient(#d3deea, #9ab0cf); border-right: 1px solid #8795a8; box-sizing: border-box; display: flex; align-items: center; gap: 4px; padding: 0 0 2px 3px; border-radius: 4px 4px 0 0; }
.etab > :last-child { margin-left: 4px; }
.ebtn { margin: 5px 4px 0 0; }
.work { height: 728px; flex: none; display: flex; }
.canvas { display: block; flex: none; background: #f0f2f8; }
.vscroll { width: 16px; background: #eff0f0; display: flex; flex-direction: column; align-items: center; box-sizing: border-box; padding: 8px 0 7px; }
.vthumb { width: 14px; height: 80px; background: #cbcccb; margin: 465px 0 auto; flex: none; }
.hscroll { height: 23px; flex: none; display: flex; align-items: center; padding: 0 21px 0 4px; border-bottom: 1px solid #949696; box-sizing: border-box; border-top: 1px solid #fbfcfc; }
.hthumb { width: 447px; height: 19px; background: #c9cac9; margin: 0 auto 0 640px; }
.sheets { flex: 1; display: flex; justify-content: space-between; }
.sheet { width: 43px; background: #fdfefe; border-right: 1px solid #888; box-sizing: border-box; padding: 6px 0 0 4px; margin-top: -1px; }
.zoom { display: flex; align-items: center; padding-right: 9px; }
.zoom i { width: 1px; height: 24px; background: #777; margin: 0 11px 0 6px; }
.zminus { margin-right: 8px; }
.zplus { margin: 0 11px 0 14px; }
.status { height: 39px; flex: none; display: flex; align-items: center; border-bottom: 1px solid #9a9a9a; box-sizing: border-box; }
.sheetname { margin-left: 5px; }
.autosave { margin-left: 823px; height: 34px; border-left: 1px solid #888; display: flex; align-items: center; padding-left: 5px; gap: 6px; }
.tray { margin: 0 0 0 auto; width: 66px; height: 34px; border: 1px solid #bbb; border-radius: 4px 9px 9px 4px; box-sizing: border-box; display: flex; align-items: center; padding-left: 5px; }
.tray .sep + * { margin: 0 13px 0 11px; }
.taskbar { height: 50px; flex: none; background: #0c0d0d; display: flex; color: #f4f4f4; }
.startbtn { margin: 15px 0 0 15px; width: 17px; }
.cortana { margin: 15px 0 0 30px; }
.grip { width: 2px; height: 21px; border: solid #3b3b3b; border-width: 0 1px; margin: 15px 12px 0 22px; }
.task { width: 48px; height: 50px; flex: none; display: flex; align-items: center; justify-content: center; position: relative; box-sizing: border-box; padding-top: 2px; background: linear-gradient(#5a84b3, #5a84b3) 4px 49px / 39px 1px no-repeat; padding-right: 1px; }
.task.active { background: #474443; border-bottom: 1px solid #7d9dc0; padding-right: 3px; }
.wsmark { position: absolute; left: 17px; top: 16px; font-weight: 700; }
.wmark { position: absolute; left: 14px; top: 19px; font-weight: 700; }
.systray { margin-left: auto; display: flex; align-items: center; border-right: 1px solid #555; margin-right: 4px; padding-right: 9px; }
.s1 { margin-left: 9px; }
.s2 { margin-left: 7px; }
.s3 { margin-left: 9px; }
.s4 { margin-left: 7px; }
.s5 { margin-left: 7px; }
.s6 { margin-left: 13px; }
.clock { display: flex; flex-direction: column; align-items: center; margin-left: 19px; width: 51px; }
.notify { position: relative; margin-left: 23px; width: 25px; }
.badge { position: absolute; left: 7px; top: 8px; width: 14px; height: 18px; border: 1px solid #9a9a9a; border-radius: 50%; background: #2b2b2b; color: #fff; font-size: 14px; line-height: 18px; text-align: center; }
.ime { position: absolute; left: 1191px; top: 789px; width: 150px; height: 28px; box-sizing: border-box; border: 1px solid #b3bfcb; background: #fbfdfe; display: flex; align-items: center; }
.topicname { fill: #17497f; font-family: "Noto Sans", "Noto Sans CJK SC", sans-serif; }
.edges path { fill: none; stroke: #444; stroke-width: 1.300; }
.shape > * { fill: #fdfefd; stroke: #555; stroke-width: 1.700; }
.labels text { font-family: "DejaVu Sans Mono", monospace; fill: #303030; stroke: #303030; stroke-width: .35; }
.labels .red { fill: #ee4a30; stroke: #ee4a30; }
.labels .blue { fill: #3455e4; stroke: #3455e4; }
.labels .it { font-style: italic; }
.ink path { fill: none; stroke: #fe1a04; stroke-width: 5.800; stroke-linecap: round; stroke-linejoin: round; }
.playtv { position: absolute; left: 1825px; top: 848px; }
.progress { position: absolute; left: 0; top: 1000px; width: 1920px; height: 2px; background: #333; display: flex; }
.played { width: 1755px; background: #00a1d6; }
.loaded { width: 62px; background: #777; }
.below { height: 2px; margin-top: 3px; display: flex; justify-content: space-between; }
.below span { width: 48px; background: #666; margin-left: 539px; }
.below b { width: 1px; background: #888; margin-right: 4px; }
</style>
